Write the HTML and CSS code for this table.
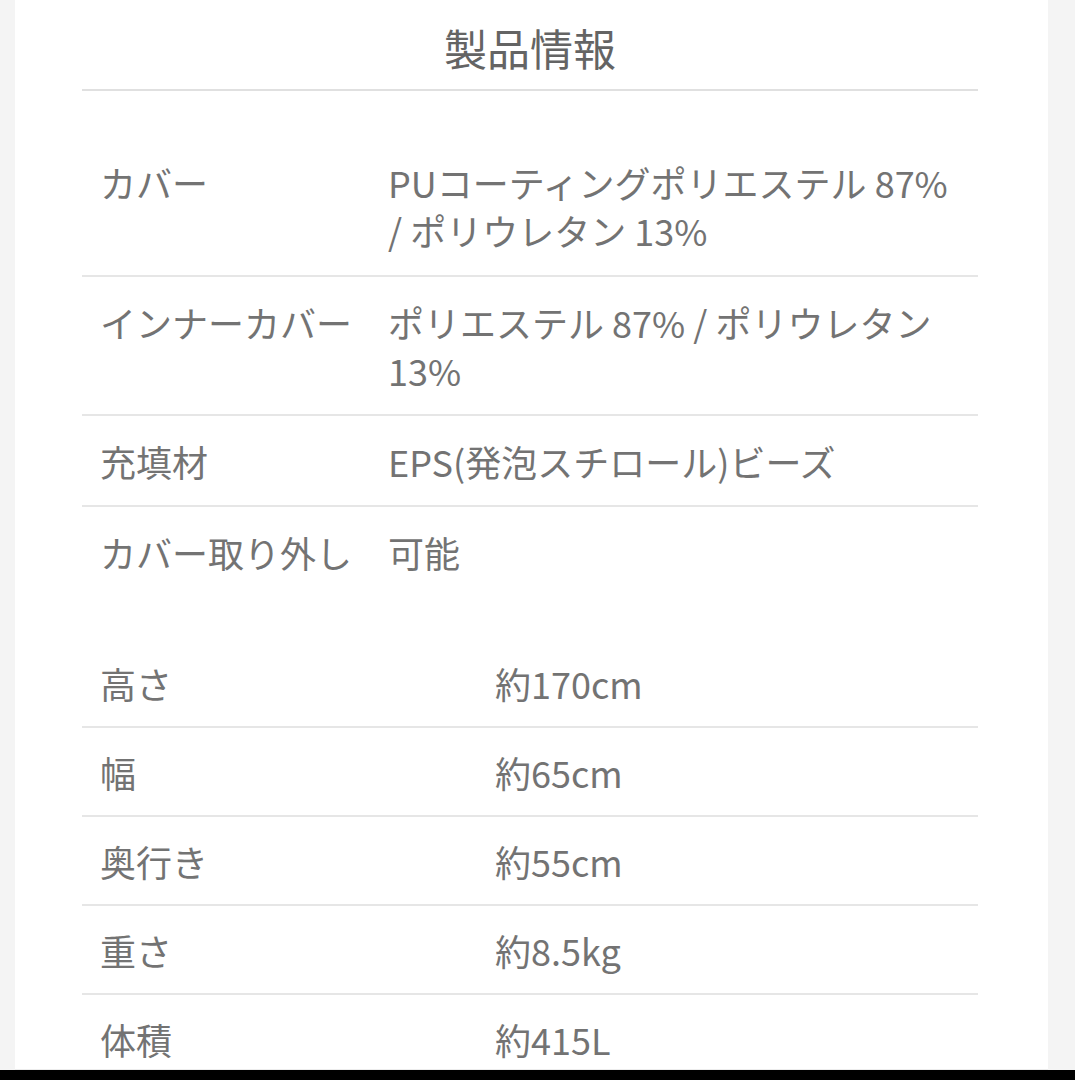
FILE: index.html
```html
<!DOCTYPE html>
<html lang="ja">
<head>
<meta charset="utf-8">
<title>製品情報</title>
<link rel="stylesheet" href="styles.css">
</head>
<body>
<div class="screen">
  <div class="side side-left"></div>
  <main class="panel">
    <h1 class="title">製品情報</h1>
    <dl class="table table-spec">
      <div class="row"><dt>カバー</dt><dd>PUコーティングポリエステル 87%<br>/ ポリウレタン 13%</dd></div>
      <div class="row"><dt>インナーカバー</dt><dd>ポリエステル 87% / ポリウレタン<br>13%</dd></div>
      <div class="row"><dt>充填材</dt><dd>EPS(発泡スチロール)ビーズ</dd></div>
      <div class="row"><dt>カバー取り外し</dt><dd>可能</dd></div>
    </dl>
    <dl class="table table-dims">
      <div class="row"><dt>高さ</dt><dd>約170cm</dd></div>
      <div class="row"><dt>幅</dt><dd>約65cm</dd></div>
      <div class="row"><dt>奥行き</dt><dd>約55cm</dd></div>
      <div class="row"><dt>重さ</dt><dd>約8.5kg</dd></div>
      <div class="row"><dt>体積</dt><dd>約415L</dd></div>
    </dl>
  </main>
  <div class="side side-right"></div>
</div>
<div class="bottom-bar"></div>
</body>
</html>
```
FILE: styles.css
```css
html, body {
  margin: 0;
  padding: 0;
  background: #ffffff;
}
body {
  width: 1075px;
  height: 1080px;
  overflow: hidden;
  font-family: "Noto Sans CJK JP", "Noto Sans", sans-serif;
  color: #737373;
}
.screen {
  display: flex;
  height: 1070px;
}
.side {
  background: #f4f4f4;
  flex: none;
}
.side-left {
  width: 15px;
}
.side-right {
  width: 27px;
}
.panel {
  flex: 1;
  background: #ffffff;
  padding: 0 70px 0 67px;
  overflow: hidden;
  border-bottom: 1px solid #ececec;
}
.title {
  margin: 0;
  padding: 17px 0 12px;
  font-size: 43px;
  line-height: 60px;
  font-weight: 400;
  text-align: center;
  color: #646464;
  border-bottom: 2px solid #e0e0e0;
}
.table {
  margin: 0;
  padding: 0;
}
.table-spec {
  margin-top: 46px;
}
.table-dims {
  margin-top: 43px;
}
.row {
  display: grid;
  padding: 21px 0 21px 18px;
  border-bottom: 2px solid #e6e6e6;
  font-size: 36px;
  line-height: 48px;
}
.row:last-child {
  border-bottom: none;
}
.table-spec .row {
  grid-template-columns: 288px 1fr;
}
.table-spec .row:nth-child(n+2) {
  padding-bottom: 20px;
}
.table-dims .row {
  grid-template-columns: 395px 1fr;
  padding: 20px 0 19px 18px;
}
.row dt,
.row dd {
  margin: 0;
  white-space: nowrap;
}
.bottom-bar {
  height: 10px;
  background: #000000;
}
```
